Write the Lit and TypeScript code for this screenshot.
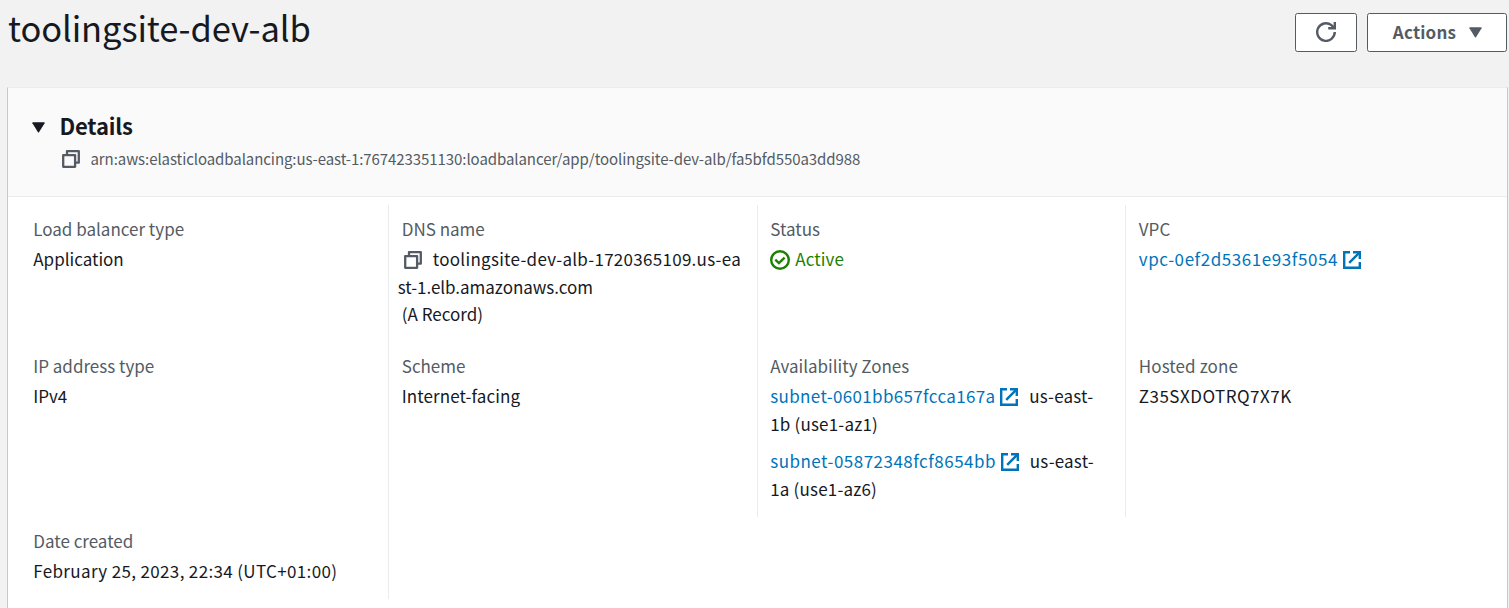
import { LitElement, html, css, svg } from "lit";
import { customElement } from "lit/decorators.js";

const copyIcon = html`<svg class="icon" width="18" height="18" viewBox="0 0 18 18" fill="none" stroke="currentColor" stroke-width="2.3">
  ${svg`<path d="M1.2 5.1h11.9v11.7H1.2z" stroke-linejoin="round"/><path d="M5 5.1V1.2h11.8v11.5h-3.6" stroke-linejoin="round"/>`}
</svg>`;

const externalIcon = html`<svg class="icon external" width="18" height="18" viewBox="0 0 18 18" fill="none" stroke="currentColor" stroke-width="2.4">
  ${svg`<path d="M7 1.2H1.2v15.6h15.6V11"/><path d="M10 1.2h6.8V8"/><path d="M16.4 1.6L6.2 11.8"/>`}
</svg>`;

const checkIcon = html`<svg class="icon check" width="20" height="20" viewBox="0 0 20 20" fill="none" stroke="currentColor" stroke-width="2.4">
  ${svg`<circle cx="10" cy="10" r="8.8"/><path d="M5.3 9.6l3.6 3.4 5.7-5.4"/>`}
</svg>`;

const refreshIcon = html`<svg width="20" height="20" viewBox="0 0 20 20" fill="none" stroke="currentColor" stroke-width="2.4">
  ${svg`<path d="M18.8 10A8.8 8.8 0 1 1 15.4 3.1L18 5.6"/><path d="M18.8 0v6.2h-6.6"/>`}
</svg>`;

const caret = html`<svg class="caret" width="13" height="11" viewBox="0 0 13 11" fill="currentColor">
  ${svg`<path d="M1 .3h11q1 0 .6.9L7 10.2q-.5.8-1 0L.4 1.2Q0 .3 1 .3z"/>`}
</svg>`;

@customElement("app-root")
export class AppRoot extends LitElement {
  static styles = css`
    :host {
      display: block;
      height: 608px;
      overflow: hidden;
      background: #f2f2f2;
      color: #16191f;
      font: 17px/27.5px "Noto Sans CJK JP", "Noto Sans", sans-serif;
    }
    * { box-sizing: border-box; }
    svg { display: block; flex: none; }
    .header {
      height: 87px;
      padding: 0 2px 0 8px;
      display: flex;
      justify-content: space-between;
      align-items: flex-start;
    }
    h1 {
      margin: 4px 0 0;
      font-size: 34.5px;
      line-height: 46px;
      font-weight: 400;
      letter-spacing: -0.1px;
    }
    .buttons { display: flex; gap: 10px; padding-top: 13px; }
    button {
      height: 39px;
      border: 1px solid #545b64;
      border-radius: 2.5px;
      background: #fff;
      color: #545b64;
      font: 700 17px/27px "Noto Sans CJK JP", "Noto Sans", sans-serif;
      padding: 0 0 2px;
      display: flex;
      align-items: center;
      justify-content: center;
    }
    .refresh { width: 62px; padding: 0 0 1px; }
    .actions { width: 140px; gap: 13px; padding-left: 1px; letter-spacing: 0.2px; }
    .actions .caret { margin-top: 1px; }
    .card {
      margin: 0 1px 0 7px;
      height: 560px;
      background: #fff;
      border: 1px solid #c4c9c9;
      border-top-color: #eaeded;
    }
    .card-header {
      height: 109px;
      background: #fafafa;
      border-bottom: 1px solid #eaeded;
      padding: 23px 24px 0;
    }
    .toggle { display: flex; align-items: center; gap: 14.5px; }
    h2 { margin: 0; font-size: 22px; line-height: 28px; font-weight: 700; letter-spacing: -0.2px; }
    .toggle .caret { margin-top: 4px; }
    .arn {
      display: flex;
      align-items: center;
      gap: 11px;
      padding-left: 29.5px;
      margin-top: 7px;
      line-height: 25px;
      font-size: 15px;
      color: #545b64;
      letter-spacing: -0.075px;
    }
    .arn .icon { margin-top: 1px; }
    .columns { padding: 8px 13.5px 0 11.5px; }
    .row { display: grid; grid-template-columns: repeat(4, 368.5px); }
    .cell { padding: 10px 13px 14.5px 12.75px; border-left: 1px solid transparent; }
    .cell + .cell { border-left-color: #eaeded; }
    .label { color: #545b64; margin-bottom: 2.5px; }
    .roomy { letter-spacing: 0.1px; }
    .wide { letter-spacing: 0.35px; }
    .wider { letter-spacing: 0.49px; }
    .widest { letter-spacing: 0.57px; }
    .icon { display: inline-block; vertical-align: -3px; }
    .dns .icon, .arn .icon { color: #545b64; }
    .dns .icon { margin: 0 11px 0 6px; }
    .dns { margin-left: -4px; letter-spacing: 0.28px; white-space: nowrap; }
    .dns-rest { letter-spacing: -0.04px; }
    .status { color: #1d8102; display: flex; align-items: center; gap: 5px; letter-spacing: 0.1px; }
    .status .icon { margin-top: 2px; }
    a { color: #0073bb; text-decoration: none; }
    .external { margin-left: 5px; }
    .zone { margin-bottom: 10px; }
    .zone:last-child { margin-bottom: 0; }
    .region { margin-left: 7px; letter-spacing: 0.2px; }
    .rest { letter-spacing: 0.18px; }
  `;

  private zone(subnet: string, spacing: string, region: string, rest: string) {
    return html`<div class="zone">
      <a class=${spacing}>${subnet}${externalIcon}</a>
      <span class="region">${region}</span><br /><span class="rest">${rest}</span>
    </div>`;
  }

  render() {
    return html`
      <div class="header">
        <h1>toolingsite-dev-alb</h1>
        <div class="buttons">
          <button class="refresh" aria-label="Refresh">${refreshIcon}</button>
          <button class="actions">Actions ${caret}</button>
        </div>
      </div>
      <section class="card">
        <div class="card-header">
          <div class="toggle">${caret}<h2>Details</h2></div>
          <div class="arn">${copyIcon}<span>arn:aws:elasticloadbalancing:us-east-1:767423351130:loadbalancer/app/toolingsite-dev-alb/fa5bfd550a3dd988</span></div>
        </div>
        <div class="columns">
          <div class="row">
            <div class="cell"><div class="label">Load balancer type</div>Application</div>
            <div class="cell">
              <div class="label">DNS name</div>
              <div class="dns">${copyIcon}toolingsite-dev-alb-1720365109.us-ea<br /><span class="dns-rest">st-1.elb.amazonaws.com</span></div>
              <div>(A Record)</div>
            </div>
            <div class="cell"><div class="label">Status</div><div class="status">${checkIcon}<span>Active</span></div></div>
            <div class="cell"><div class="label roomy">VPC</div><a class="widest">vpc-0ef2d5361e93f5054${externalIcon}</a></div>
          </div>
          <div class="row">
            <div class="cell"><div class="label">IP address type</div>IPv4</div>
            <div class="cell"><div class="label">Scheme</div><span class="roomy">Internet-facing</span></div>
            <div class="cell">
              <div class="label">Availability Zones</div>
              ${this.zone("subnet-0601bb657fcca167a", "wide", "us-east-", "1b (use1-az1)")}
              ${this.zone("subnet-05872348fcf8654bb", "wider", "us-east-", "1a (use1-az6)")}
            </div>
            <div class="cell"><div class="label roomy">Hosted zone</div><span class="wider">Z35SXDOTRQ7X7K</span></div>
          </div>
          <div class="row">
            <div class="cell"><div class="label">Date created</div><span class="wide">February 25, 2023, 22:34 (UTC+01:00)</span></div>
            <div class="cell"></div>
          </div>
        </div>
      </section>
    `;
  }
}
